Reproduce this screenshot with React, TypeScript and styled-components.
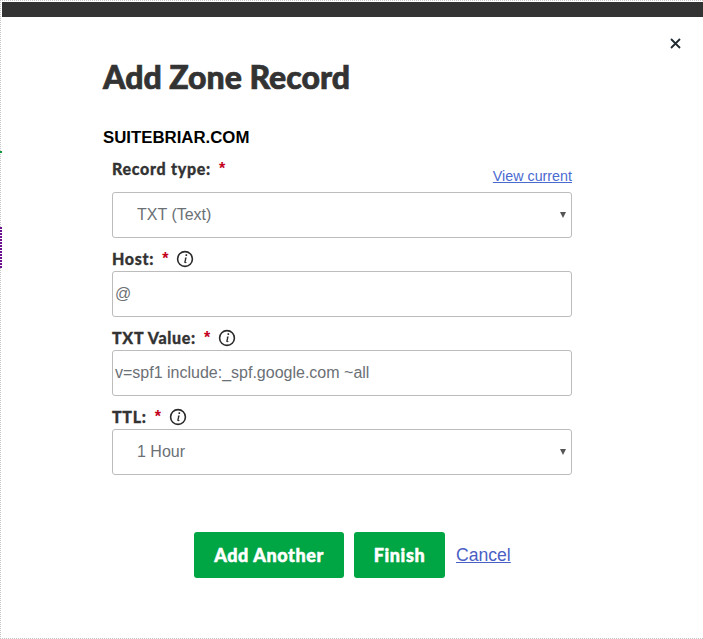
import styled, { createGlobalStyle } from 'styled-components'

const GlobalStyle = createGlobalStyle`
  html, body {
    margin: 0;
    padding: 0;
    background: #ffffff;
  }
`

const HEADING_FONT = `Lato, "Open Sans", sans-serif`
const BODY_FONT = `"Liberation Sans", Arial, sans-serif`

function InfoIcon() {
  return (
    <InfoSvg viewBox="0 0 17 17" aria-hidden="true">
      <circle cx="8.5" cy="8.5" r="7" fill="none" stroke="#2a2a2a" strokeWidth="1.5" />
      <path d="M9 4h1.5v1.6H9zM8.8 7h1.3l-1 4.3c-.1.4.3.5 1 .1l-.1.7c-1.3.6-2.4.4-2.2-.8l.8-3.6h-.7z" fill="#2a2a2a" />
    </InfoSvg>
  )
}

function Field(props: { label: string; info?: boolean; first?: boolean; aside?: JSX.Element; children: JSX.Element }) {
  return (
    <FieldBlock>
      <LabelRow $first={props.first}>
        <Label>{props.label}</Label>
        <Required>*</Required>
        {props.info && <InfoIcon />}
        {props.aside}
      </LabelRow>
      {props.children}
    </FieldBlock>
  )
}

function App() {
  return (
    <Frame>
      <GlobalStyle />
      <GreenMark />
      <PurpleMark />
      <TopBar />
      <CloseButton aria-label="Close">
        <svg width="11" height="11" viewBox="0 0 11 11" aria-hidden="true">
          <path d="M1 1l9 9M10 1l-9 9" stroke="#1f2a30" strokeWidth="1.8" fill="none" />
        </svg>
      </CloseButton>
      <Dialog>
        <Title>Add Zone Record</Title>
        <Domain>SUITEBRIAR.COM</Domain>
        <Form>
          <Field first label="Record type:" aside={<ViewCurrent href="#">View current</ViewCurrent>}>
            <SelectBox>
              TXT (Text)
              <Caret />
            </SelectBox>
          </Field>
          <Field label="Host:" info>
            <TextBox>@</TextBox>
          </Field>
          <Field label="TXT Value:" info>
            <TextBox>v=spf1 include:_spf.google.com ~all</TextBox>
          </Field>
          <Field label="TTL:" info>
            <SelectBox>
              1 Hour
              <Caret />
            </SelectBox>
          </Field>
        </Form>
        <Buttons>
          <PrimaryButton>Add Another</PrimaryButton>
          <PrimaryButton $wide={false}>Finish</PrimaryButton>
          <CancelLink href="#">Cancel</CancelLink>
        </Buttons>
      </Dialog>
    </Frame>
  )
}

const Frame = styled.div`
  position: relative;
  box-sizing: border-box;
  width: 703px;
  height: 639px;
  padding: 1px 0 0 1px;
  border-left: 1px dotted #c4c4c4;
  border-top: 1px dotted #c4c4c4;
  border-bottom: 1px dotted #c4c4c4;
  background: #ffffff;
`

const GreenMark = styled.div`
  position: absolute;
  top: 150px;
  left: -1px;
  width: 2px;
  height: 2px;
  background: #0a9a3c;
`

const PurpleMark = styled.div`
  position: absolute;
  top: 226px;
  left: -1px;
  width: 2px;
  height: 41px;
  background: repeating-linear-gradient(#6a0f8e 0 2px, #ffffff 2px 3px);
`

const TopBar = styled.div`
  height: 15px;
  background: #333333;
`

const CloseButton = styled.button`
  position: absolute;
  top: 37px;
  left: 669px;
  display: flex;
  width: 11px;
  height: 11px;
  padding: 0;
  border: 0;
  background: none;
`

const Dialog = styled.div`
  padding: 41px 0 0 101px;
`

const Title = styled.h1`
  margin: 0;
  font-family: ${HEADING_FONT};
  font-size: 32px;
  font-weight: 900;
  line-height: 38px;
  color: #333333;
  -webkit-text-stroke: 0.7px #333333;
`

const Domain = styled.div`
  margin-top: 32px;
  font-family: ${BODY_FONT};
  font-size: 16.8px;
  font-weight: 700;
  line-height: 20px;
  color: #000000;
`

const Form = styled.div`
  display: flex;
  flex-direction: column;
  width: 460px;
  margin: 2px 0 0 9px;
`

const FieldBlock = styled.div`
  display: flex;
  flex-direction: column;
`

const LabelRow = styled.div<{ $first?: boolean }>`
  display: flex;
  align-items: center;
  box-sizing: border-box;
  height: ${(props) => (props.$first ? '42px' : '33px')};
  padding: ${(props) => (props.$first ? '0 0 6px' : '7px 0 0')};
`

const Label = styled.span`
  font-family: ${HEADING_FONT};
  font-size: 16px;
  font-weight: 900;
  letter-spacing: 0.7px;
  color: #333333;
  -webkit-text-stroke: 0.3px #333333;
`

const Required = styled.span`
  margin: 1px 0 0 8px;
  font-family: ${BODY_FONT};
  font-size: 16px;
  font-weight: 700;
  color: #c4001a;
`

const InfoSvg = styled.svg`
  width: 18px;
  height: 18px;
  margin: 2px 0 0 8px;
`

const ViewCurrent = styled.a`
  margin-left: auto;
  padding-top: 16px;
  font-family: ${BODY_FONT};
  font-size: 14.3px;
  color: #4a6ad0;
`

const boxStyles = `
  display: flex;
  align-items: center;
  position: relative;
  box-sizing: border-box;
  height: 46px;
  border: 1px solid #bcbcbc;
  border-radius: 3px;
  font-family: ${BODY_FONT};
  font-size: 16px;
  color: #6b7075;
`

const SelectBox = styled.div`
  ${boxStyles}
  padding-left: 24px;
`

const TextBox = styled.div`
  ${boxStyles}
  padding-left: 2px;
`

const Caret = styled.span`
  position: absolute;
  right: 5px;
  top: 19px;
  width: 0;
  height: 0;
  border-left: 3px solid transparent;
  border-right: 3px solid transparent;
  border-top: 6px solid #555555;
`

const Buttons = styled.div`
  display: flex;
  align-items: center;
  margin: 57px 0 0 91px;
`

const PrimaryButton = styled.button<{ $wide?: boolean }>`
  box-sizing: border-box;
  width: ${(props) => (props.$wide === false ? '91px' : '150px')};
  height: 46px;
  margin-right: 10px;
  padding: 0;
  border: 0;
  border-radius: 3px;
  background: #00a544;
  font-family: ${HEADING_FONT};
  font-size: 18px;
  font-weight: 900;
  letter-spacing: 0.6px;
  color: #ffffff;
  -webkit-text-stroke: 0.5px #ffffff;
`

const CancelLink = styled.a`
  margin-left: 1px;
  font-family: ${BODY_FONT};
  font-size: 17.6px;
  color: #4a5fc4;
`

export default App
